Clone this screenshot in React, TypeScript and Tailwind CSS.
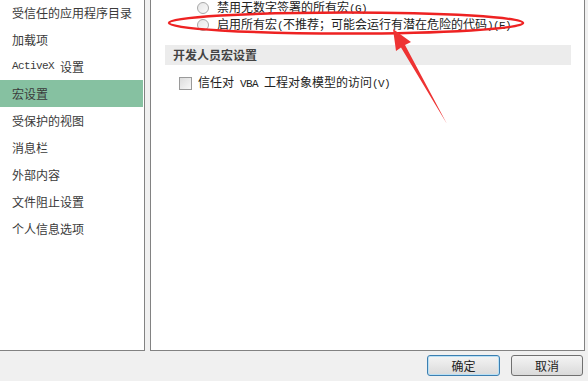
const cjk = "font-['SimSun','Noto_Sans_CJK_SC',sans-serif]";

function A({ children }: { children: React.ReactNode }) {
  return (
    <span className="font-['Liberation_Mono',monospace] text-[11px] tracking-[-0.6px] whitespace-pre">
      {children}
    </span>
  );
}

const menu: React.ReactNode[] = [
  "受信任的应用程序目录",
  "加载项",
  <>
    <A>{"ActiveX "}</A>设置
  </>,
  "宏设置",
  "受保护的视图",
  "消息栏",
  "外部内容",
  "文件阻止设置",
  "个人信息选项",
];

function Radio() {
  return (
    <span className="w-[12px] h-[12px] rounded-full border border-[#a8a8a8] bg-gradient-to-br from-[#e6e6e6] to-[#fafafa] shrink-0" />
  );
}

export default function App() {
  return (
    <div className={`relative w-[588px] h-[381px] bg-[#f0f0f0] overflow-hidden text-[12px] ${cjk}`}>
      <div className="flex h-[351px]">
        <div className="w-[145px] bg-white border-r border-b border-[#828282] overflow-hidden">
          <div className="mt-[-1px]">
            {menu.map((m, i) => (
              <div
                key={i}
                className={`h-[27px] flex items-center pl-[12px] mr-[1px] text-[#3a3a3a] ${i === 3 ? "bg-[#86c1a1]" : ""}`}
              >
                {m}
              </div>
            ))}
          </div>
        </div>
        <div className="w-[5px]" />
        <div className="w-[435px] bg-white border-l border-r border-b border-[#828282] overflow-hidden pl-[14px] pr-[13px] text-[#222]">
          <div className="mt-[-1px] pl-[32px]">
            <div className="h-[17px] flex items-center gap-[8px]">
              <Radio />
              <span>
                禁用无数字签署的所有宏<A>(G)</A>
              </span>
            </div>
            <div className="h-[17px] flex items-center gap-[8px]">
              <Radio />
              <span>
                启用所有宏<A>(</A>不推荐；可能会运行有潜在危险的代码<A>)(E)</A>
              </span>
            </div>
          </div>
          <div className="mt-[12px] h-[20px] bg-[#ececec] flex items-center pl-[8px] font-bold text-[#444]">
            开发人员宏设置
          </div>
          <div className="mt-[11px] pl-[14px] flex items-center gap-[6px] h-[14px]">
            <span className="w-[13px] h-[13px] border border-[#9a9a9a] bg-gradient-to-br from-[#dcdcdc] to-[#f8f8f8] shrink-0" />
            <span>
              信任对<A>{" VBA "}</A>工程对象模型的访问<A>(V)</A>
            </span>
          </div>
        </div>
      </div>
      <div className="flex justify-end gap-[11px] pr-[5px] pt-[4px]">
        <button className="w-[73px] h-[21px] rounded-[3px] border border-[#3c7fb1] bg-gradient-to-b from-[#f4f4f4] to-[#dadada] text-[#222] shadow-[inset_0_0_0_1px_#b9e0f5]">
          确定
        </button>
        <button className="w-[72px] h-[21px] rounded-[3px] border border-[#707070] bg-gradient-to-b from-[#f4f4f4] to-[#dadada] text-[#222]">
          取消
        </button>
      </div>
      <svg className="absolute inset-0 pointer-events-none" width="588" height="381">
        <ellipse cx="346" cy="23" rx="177" ry="10.5" fill="none" stroke="#ee2222" strokeWidth="2.5" />
        <polygon points="393,29 396,51 401,47.5 447,124 405,45 411,42" fill="#ee3333" />
      </svg>
    </div>
  );
}
